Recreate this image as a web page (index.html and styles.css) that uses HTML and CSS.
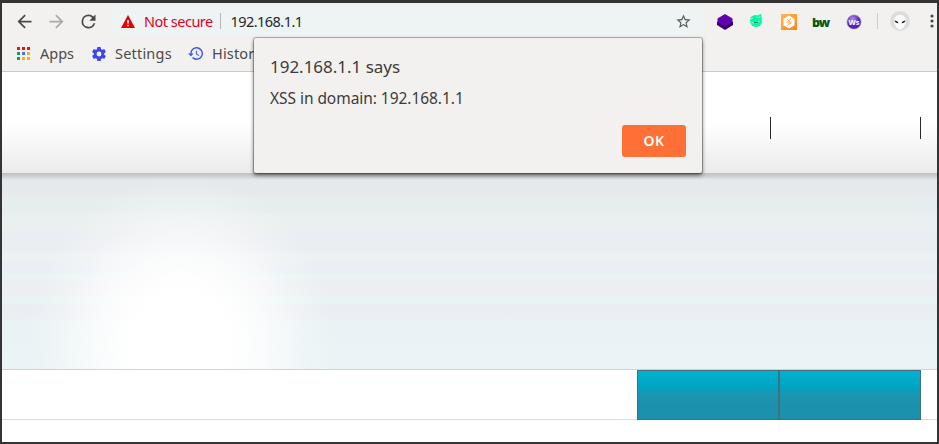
FILE: index.html
```html
<!DOCTYPE html>
<html lang="en">
<head>
<meta charset="utf-8">
<title>192.168.1.1</title>
<link rel="stylesheet" href="styles.css">
</head>
<body>
<div class="window">
  <header class="chrome">
    <div class="toolbar">
      <svg class="nav" viewBox="0 0 24 24"><path d="M20 11H7.83l5.59-5.59L12 4l-8 8 8 8 1.41-1.41L7.83 13H20z"/></svg>
      <svg class="nav nav-off" viewBox="0 0 24 24"><path d="M12 4l-1.41 1.41L16.17 11H4v2h12.17l-5.58 5.59L12 20l8-8z"/></svg>
      <svg class="nav" viewBox="0 0 24 24"><path d="M17.65 6.35A7.96 7.96 0 0 0 12 4a8 8 0 1 0 7.73 10h-2.08A6 6 0 1 1 12 6c1.66 0 3.14.69 4.22 1.78L13 11h7V4z"/></svg>
      <div class="omnibox">
        <svg class="warn" viewBox="0 0 14 13"><path fill="#e60000" d="M7 0l7 13H0z"/><path fill="#fff" d="M6.2 5h1.6v3.6H6.2zM6.2 9.8h1.6v1.5H6.2z"/></svg>
        <span class="insecure">Not secure</span>
        <span class="divider"></span>
        <span class="url">192.168.1.1</span>
        <svg class="star" viewBox="0 0 24 24"><path d="M22 9.24l-7.19-.62L12 2 9.19 8.63 2 9.24l5.46 4.73L5.82 21 12 17.27 18.18 21l-1.63-7.03zM12 15.4l-3.76 2.27 1-4.28-3.32-2.88 4.38-.38L12 6.1l1.71 4.04 4.38.38-3.32 2.88 1 4.28z"/></svg>
      </div>
      <div class="extensions">
        <svg viewBox="0 0 16 16"><path fill="#35006e" d="M0 8l8-4 8 4v3l-8 5-8-5z"/><path fill="#6200b3" d="M8 0l7.500 4.500V8L8 12.300.5 8V4.500z"/></svg>
        <svg class="ext-green" viewBox="0 0 16 16"><circle cx="7" cy="7" r="6" fill="#07f5a5"/><path fill="#07f5a5" d="M1 3.500L6 1 4 5zM9 1l3-1 1 5z"/><path d="M1 5l3-1M7 3l3 1 1-2M2 8l3 1M7 9l4-2" stroke="#c9fae7" stroke-width=".7" fill="none"/><path d="M5 8.500h4" stroke="#08794f" stroke-width=".8"/></svg>
        <svg viewBox="0 0 16 16"><defs><linearGradient id="o" x2="1" y2="1"><stop stop-color="#ffb84d"/><stop offset="1" stop-color="#ff8410"/></linearGradient></defs><path fill="url(#o)" d="M0 0h16v16H0z"/><path fill="#fff" d="M8 1.500l5.500 3.200v6.600L8 14.500l-5.500-3.200V4.700z"/><path d="M6 5l2 2 2-3M5.500 8h5M8 7v3l-2 2M8 10l2.500-1" fill="none" stroke="#ffb35c"/></svg>
        <span class="bw">bw</span>
        <svg class="ext-w" viewBox="0 0 16 16"><defs><radialGradient id="p" cx=".4" cy=".3"><stop stop-color="#ab91df"/><stop offset="1" stop-color="#5720b0"/></radialGradient></defs><circle cx="8" cy="8" r="7" fill="url(#p)" stroke="#9a78d4" stroke-dasharray="1 1"/><text x="2.500" y="11" textLength="11">Ws</text></svg>
      </div>
      <span class="divider divider-ext"></span>
      <svg class="avatar" viewBox="0 0 20 20"><circle cx="10" cy="10" r="10" fill="#dcdcdd"/><path fill="#fafafa" d="M10 4c4.500 0 6 2.500 6 5.500 0 4-3 9-6 9s-6-5-6-9C4 6.500 5.500 4 10 4z"/><path fill="#222" d="M4.500 9.500c2 0 3.500 1 4 2.700-2.500 0-3.500-1-4-2.700zM15.500 9.500c-2 0-3.500 1-4 2.700 2.500 0 3.500-1 4-2.700z"/></svg>
      <svg class="more" viewBox="0 0 4 14"><circle cx="2" cy="2" r="1.600"/><circle cx="2" cy="7" r="1.600"/><circle cx="2" cy="12" r="1.600"/></svg>
    </div>
    <nav class="bookmarks">
      <svg class="apps" viewBox="0 0 13 13"><path fill="#f01010" d="M0 0h3v3H0zM5 0h3v3H5zM10 0h3v3h-3z"/><path fill="#109d58" d="M0 5h3v3H0zM0 10h3v3H0z"/><path fill="#3b78f0" d="M5 5h3v3H5z"/><path fill="#f8b400" d="M10 5h3v3h-3zM5 10h3v3H5zM10 10h3v3h-3z"/></svg>
      <span class="label-apps">Apps</span>
      <svg class="gear" viewBox="2 2 20 20"><path d="M19.430 12.980c.04-.32.07-.64.07-.98s-.03-.66-.07-.98l2.110-1.650c.19-.15.24-.42.12-.64l-2-3.460c-.12-.22-.39-.3-.61-.22l-2.490 1c-.52-.4-1.080-.73-1.690-.98l-.38-2.650A.49.49 0 0 0 14 2h-4c-.25 0-.46.18-.49.42l-.38 2.650c-.61.25-1.170.59-1.690.98l-2.490-1c-.23-.09-.49 0-.61.22l-2 3.460c-.13.22-.07.49.12.64l2.110 1.650c-.04.32-.07.65-.07.98s.03.66.07.98l-2.110 1.650c-.19.15-.24.42-.12.64l2 3.460c.12.22.39.3.61.22l2.490-1c.52.4 1.080.73 1.690.98l.38 2.650c.03.24.24.42.49.42h4c.25 0 .46-.18.49-.42l.38-2.650c.61-.25 1.170-.59 1.690-.98l2.490 1c.23.09.49 0 .61-.22l2-3.460c.12-.22.07-.49-.12-.64zM12 15.500a3.500 3.500 0 1 1 0-7 3.500 3.500 0 0 1 0 7z"/></svg>
      <span class="label-settings">Settings</span>
      <svg class="history" viewBox="1 3 21 18"><path d="M13 3a9 9 0 0 0-9 9H1l3.890 3.890.07.14L9 12H6a7 7 0 1 1 2.060 4.940l-1.420 1.420A9 9 0 1 0 13 3zm-1 5v5l4.280 2.540.72-1.210-3.500-2.080V8z"/></svg>
      <span class="label-history">History</span>
    </nav>
  </header>
  <main class="page">
    <section class="masthead"><i></i><i></i></section>
    <section class="hero"></section>
    <section class="menu"><i></i><i></i></section>
  </main>
</div>
<div class="dialog" role="alertdialog">
  <h1>192.168.1.1 says</h1>
  <p>XSS in domain: 192.168.1.1</p>
  <button>OK</button>
</div>
</body>
</html>
```

FILE: styles.css
```css
* { box-sizing: border-box; }
body {
  margin: 0;
  width: 939px;
  height: 444px;
  overflow: hidden;
  font-family: "Noto Sans", "Open Sans", sans-serif;
  color: #3c3c3c;
}
.window {
  height: 444px;
  border: solid #343434;
  border-width: 3px 2px 2px;
  background: #fff;
}
svg { flex: none; display: block; }
span { white-space: nowrap; }

.chrome { height: 69px; background: #f2f1ef; border-bottom: 1px solid #c9c9c8; }
.toolbar { display: flex; align-items: center; height: 36px; padding-left: 11.500px; }
.nav { width: 21px; height: 21px; margin-right: 11px; fill: #4a4a4a; }
.nav-off { fill: #aaa; }
.omnibox {
  display: flex;
  flex: none;
  align-items: center;
  width: 594px;
  height: 28px;
  padding: 0 12px 0 11.500px;
  border-radius: 14px;
  background: #eef3f4;
}
.warn { width: 14px; height: 13px; }
.insecure { width: 76px; margin-left: 9px; font-size: 14.500px; letter-spacing: -0.5px; color: #e6001f; }
.divider { width: 1px; height: 16px; background: #b5b8ba; }
.url { margin-left: 9.500px; font-size: 14.500px; letter-spacing: -0.55px; color: #25282c; }
.star { width: 17px; height: 17px; margin-left: auto; fill: #55595d; }
.extensions { display: flex; flex: none; align-items: center; gap: 16px; margin-left: 13.500px; padding-top: 2px; }
.extensions svg { width: 16px; height: 16px; }
.extensions .ext-w { margin-left: 1px; }
.bw { width: 16px; height: 16px; margin-left: -1px; margin-right: 1px; font: 800 12.500px/17px "Open Sans", sans-serif; letter-spacing: -1.3px; color: #07561c; }
.ext-w text { font: bold 7.500px "Open Sans", sans-serif; fill: #fff; }
.divider-ext { margin-left: 15px; background: #ccc; }
.avatar { width: 20px; height: 20px; margin-left: 12px; }
.more { width: 4px; height: 14px; margin-left: 20px; fill: #494949; }

.bookmarks { display: flex; align-items: center; height: 29px; padding-left: 15px; font-size: 14.500px; line-height: 20px; color: #4a4a4a; }
.bookmarks span { padding-bottom: 1px; }
.apps { width: 13px; height: 13px; }
.label-apps { width: 43px; margin-left: 10px; }
.gear { width: 14px; height: 14px; margin-left: 9px; fill: #3b48e8; }
.label-settings { width: 65px; margin-left: 9px; letter-spacing: 0.2px; }
.history { width: 15px; height: 13px; margin-left: 8px; fill: #3b58e8; }
.label-history { margin-left: 9px; letter-spacing: 0.15px; }

.masthead {
  display: flex;
  justify-content: flex-end;
  gap: 149px;
  height: 101px;
  padding: 45px 16px 0 0;
  background: linear-gradient(#fff 50%, #f5f5f5 76%, #ebebeb);
}
.masthead i { width: 1px; height: 22px; background: #292929; }
.hero {
  height: 197px;
  border-bottom: 1px solid #cdd4d6;
  background:
    linear-gradient(#bfc5c7 1px, rgba(198,204,206,.9) 3px, transparent 7px),
    radial-gradient(ellipse 155px 165px at 179px 170px, #fff 32%, rgba(255,255,255,.75) 54%, rgba(255,255,255,.25) 80%, transparent),
    linear-gradient(#e5e9ec 12px, #e8e9ed 22px, #e6eeed 23px, #e7edf0 40px, #eaf0ef 41px, #eaefef 60px, #eaedf2 61px, #eaedf2 79px, #ebf2f1 80px, #ebf2f1 88px, #ebeff3 89px, #ebeff3 100px, #e9f3f3 101px, #eaf3f3 106px, #edeef2 107px, #edeef2 122px, #e9f3f3 123px, #e9f3f3 130px, #eaedf2 131px, #eaeff3 146px, #e9f2f4 147px, #eaf3f5);
}
.menu {
  display: flex;
  justify-content: flex-end;
  height: 50px;
  padding-right: 16px;
  border-bottom: 1px solid #dcdcdc;
}
.menu i { width: 142px; height: 50px; border: 1px solid #42717a; background: linear-gradient(#00b3d2, #00a3c3 32%, #1b96b1 50%, #1c90ac 70%); }

.dialog {
  position: absolute;
  left: 254px;
  top: 38px;
  width: 448px;
  height: 135px;
  padding: 16px;
  border-radius: 2px;
  background: #f2f1ef;
  box-shadow: 0 0 0 1px rgba(0,0,0,.25), 0 2px 4px rgba(0,0,0,.6);
}
.dialog h1 { margin: 0; font-size: 17px; line-height: 25px; font-weight: 400; letter-spacing: -0.02px; }
.dialog p { margin: 8px 0 0; font-size: 15.500px; line-height: 22px; letter-spacing: -0.05px; }
.dialog button {
  display: block;
  width: 64px;
  height: 32px;
  margin: 16px 0 0 auto;
  padding: 0;
  border: 0;
  border-radius: 3px;
  background: #ff7036;
  color: #fff;
  font: 600 14px/32px "Noto Sans", sans-serif;
  letter-spacing: 0.5px;
}
```
